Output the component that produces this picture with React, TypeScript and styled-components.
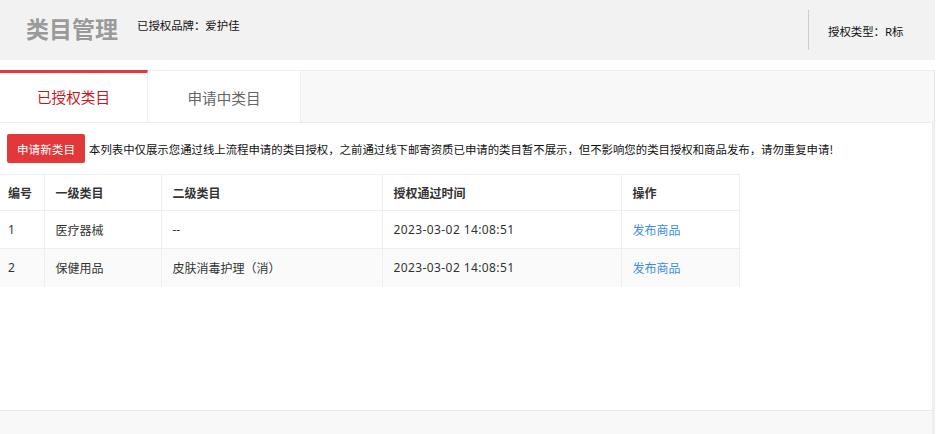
import React from "react";
import styled, { createGlobalStyle } from "styled-components";

const Global = createGlobalStyle`
  html, body { margin: 0; padding: 0; background: #fff; }
  body { font-family: "Noto Sans", "Noto Sans CJK SC", sans-serif; color: #333; }
  * { box-sizing: border-box; }
`;

const Page = styled.div`
  width: 935px;
  display: flex;
  flex-direction: column;
`;

const Header = styled.div`
  height: 60px;
  background: #f2f2f2;
  display: flex;
  align-items: center;
  padding-left: 26px;
`;

const Title = styled.h1`
  margin: 0;
  font-size: 23px;
  font-weight: 700;
  color: #9a9a9a;
  font-family: "Noto Sans CJK SC", sans-serif;
  line-height: 1;
  margin-top: -4px;
`;

const Brand = styled.span`
  margin-left: 19px;
  font-size: 11.4px;
  color: #111;
  font-family: "Noto Sans CJK SC", sans-serif;
  margin-top: -10px;
`;

const HeaderRight = styled.div`
  margin-left: auto;
  height: 40px;
  border-left: 1px solid #ccc;
  padding-left: 19px;
  width: 127px;
  display: flex;
  align-items: center;
  font-size: 11.4px;
  color: #111;
  padding-top: 2px;
`;

const Spacer = styled.div`
  height: 10px;
`;

const TabBar = styled.div`
  height: 53px;
  background: #f8f8f8;
  border-top: 1px solid #ececec;
  border-right: 1px solid #e6e6e6;
  border-bottom: 1px solid #ececec;
  display: flex;
`;

const Tab = styled.div<{ $active?: boolean }>`
  width: ${(p) => (p.$active ? "148px" : "153px")};
  background: #fff;
  border-right: 1px solid #ececec;
  border-top: 3px solid ${(p) => (p.$active ? "#e0383e" : "transparent")};
  margin-top: ${(p) => (p.$active ? "-1px" : "0")};
  display: flex;
  align-items: center;
  justify-content: center;
  font-size: 14.6px;
  font-family: "Noto Sans CJK SC", sans-serif;
  color: ${(p) => (p.$active ? "#c8161d" : "#666")};
  padding-bottom: 2px;
`;

const Content = styled.div`
  height: 287px;
  background: #fff;
  border-right: 3px solid #eee;
  padding-top: 11px;
`;

const Notice = styled.div`
  display: flex;
  align-items: center;
  padding-left: 7px;
  gap: 4px;
`;

const PrimaryButton = styled.button`
  width: 78px;
  height: 29px;
  border: none;
  border-radius: 2px;
  background: #e2383a;
  color: #fff;
  font-size: 11.6px;
  font-family: "Noto Sans CJK SC", sans-serif;
  padding: 0;
  cursor: pointer;
`;

const NoticeText = styled.span`
  font-size: 11.4px;
  color: #111;
  font-family: "Noto Sans CJK SC", sans-serif;
`;

const Table = styled.table`
  margin-top: 11px;
  border-collapse: collapse;
  table-layout: fixed;
  width: 739px;
  font-size: 12px;
`;

const Th = styled.th<{ $w: number }>`
  width: ${(p) => p.$w}px;
  height: 36px;
  text-align: left;
  font-weight: 600;
  color: #333;
  padding: 0 0 0 ${(p) => (p.$w < 50 ? 8 : 11)}px;
  border: 1px solid #eee;
  border-left: ${(p) => (p.$w < 50 ? "none" : "1px solid #eee")};
`;

const Tr = styled.tr<{ $alt?: boolean }>`
  background: ${(p) => (p.$alt ? "#fafafa" : "#fff")};
`;

const Td = styled.td<{ $first?: boolean }>`
  height: 38px;
  color: #333;
  padding: 0 0 0 ${(p) => (p.$first ? 8 : 11)}px;
  border: 1px solid #eee;
  border-left: ${(p) => (p.$first ? "none" : "1px solid #eee")};
  border-bottom: none;
`;

const DateText = styled.span`
  letter-spacing: 0.4px;
`;

const Link = styled.a`
  color: #3a8ee6;
  text-decoration: none;
  cursor: pointer;
`;

const Footer = styled.div`
  height: 24px;
  background: #f8f8f8;
  border-top: 1px solid #e8e8e8;
  border-right: 3px solid #eee;
`;

const cols = [
  { label: "编号", w: 44 },
  { label: "一级类目", w: 117 },
  { label: "二级类目", w: 221 },
  { label: "授权通过时间", w: 239 },
  { label: "操作", w: 118 },
];

const rows = [
  { id: "1", first: "医疗器械", second: "--", time: "2023-03-02 14:08:51" },
  { id: "2", first: "保健用品", second: "皮肤消毒护理（消）", time: "2023-03-02 14:08:51" },
];

export default function App() {
  return (
    <>
      <Global />
      <Page>
        <Header>
          <Title>类目管理</Title>
          <Brand>已授权品牌：爱护佳</Brand>
          <HeaderRight>授权类型：R标</HeaderRight>
        </Header>
        <Spacer />
        <TabBar>
          <Tab $active>已授权类目</Tab>
          <Tab>申请中类目</Tab>
        </TabBar>
        <Content>
          <Notice>
            <PrimaryButton>申请新类目</PrimaryButton>
            <NoticeText>
              本列表中仅展示您通过线上流程申请的类目授权，之前通过线下邮寄资质已申请的类目暂不展示，但不影响您的类目授权和商品发布，请勿重复申请!
            </NoticeText>
          </Notice>
          <Table>
            <thead>
              <tr>
                {cols.map((c) => (
                  <Th key={c.label} $w={c.w}>
                    {c.label}
                  </Th>
                ))}
              </tr>
            </thead>
            <tbody>
              {rows.map((r, i) => (
                <Tr key={r.id} $alt={i % 2 === 1}>
                  <Td $first>{r.id}</Td>
                  <Td>{r.first}</Td>
                  <Td>{r.second}</Td>
                  <Td>
                    <DateText>{r.time}</DateText>
                  </Td>
                  <Td>
                    <Link>发布商品</Link>
                  </Td>
                </Tr>
              ))}
            </tbody>
          </Table>
        </Content>
        <Footer />
      </Page>
    </>
  );
}
